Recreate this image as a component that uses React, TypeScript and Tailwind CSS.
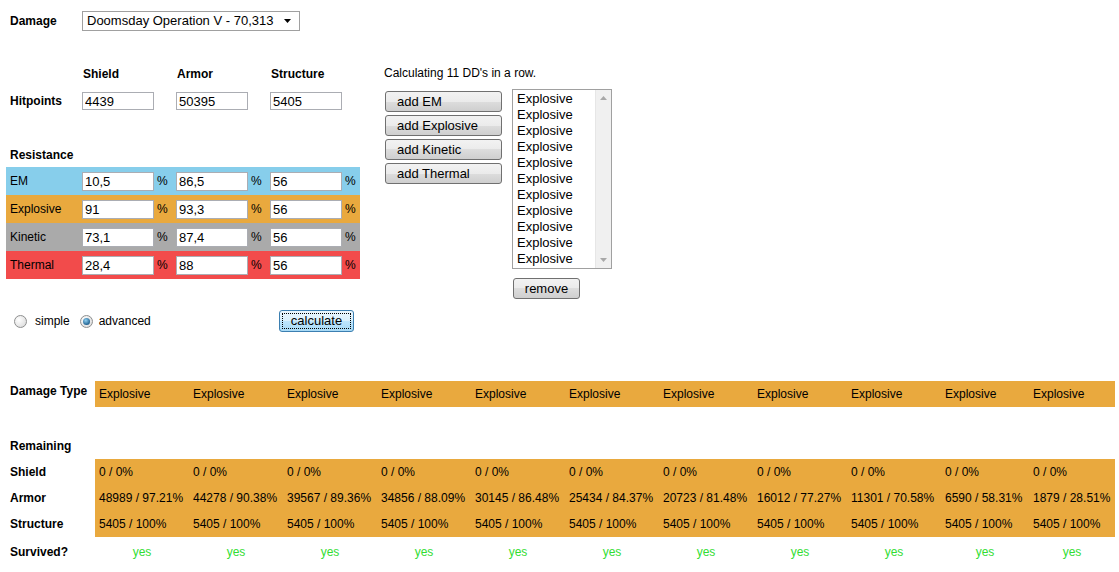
import React from 'react';

const resist = [
  { name: 'EM', bg: 'bg-[#87ceeb]', v: ['10,5', '86,5', '56'] },
  { name: 'Explosive', bg: 'bg-[#e9a93e]', v: ['91', '93,3', '56'] },
  { name: 'Kinetic', bg: 'bg-[#aaaaaa]', v: ['73,1', '87,4', '56'] },
  { name: 'Thermal', bg: 'bg-[#f24b4b]', v: ['28,4', '88', '56'] },
];

const armor = [
  '48989 / 97.21%', '44278 / 90.38%', '39567 / 89.36%', '34856 / 88.09%', '30145 / 86.48%',
  '25434 / 84.37%', '20723 / 81.48%', '16012 / 77.27%', '11301 / 70.58%', '6590 / 58.31%', '1879 / 28.51%',
];

const cols = 'grid grid-cols-[89px_94px_94px_94px_94px_94px_94px_94px_94px_94px_88px_86px]';
const leftCols = 'grid grid-cols-[76px_72px_22px_72px_22px_72px_18px]';
const btn =
  'h-[21px] rounded-[3px] border border-[#707070] bg-[linear-gradient(#f2f2f2,#ebebeb_50%,#dddddd_50%,#cfcfcf)] text-[13px] text-black';

function Field({ value, tall }: { value: string; tall?: boolean }) {
  return (
    <input
      readOnly
      defaultValue={value}
      className={`${tall ? 'h-[19px]' : 'h-[18px]'} w-[72px] border border-[#abadb3] bg-white pl-[2px] text-[13px] text-black outline-none`}
    />
  );
}

function Radio({ checked }: { checked?: boolean }) {
  return (
    <span className="flex h-[13px] w-[13px] items-center justify-center rounded-full border border-[#8e8f8f] bg-[radial-gradient(circle_at_35%_35%,#ffffff,#d6d6d6)]">
      {checked && (
        <span className="h-[7px] w-[7px] rounded-full bg-[radial-gradient(circle_at_40%_35%,#8fd0f2,#1b5c8c_75%)]" />
      )}
    </span>
  );
}

function Row({ label, cells, orange, center, green, h = 'h-[26px]', labelTop }: {
  label: string; cells?: string[]; orange?: boolean; center?: boolean; green?: boolean; h?: string; labelTop?: boolean;
}) {
  return (
    <div className={`${cols} ${h}`}>
      <div className={`flex pl-[4px] font-bold ${labelTop ? 'items-start pt-[3px]' : 'items-center'}`}>{label}</div>
      {(cells ?? Array(11).fill('')).map((c, i) => (
        <div
          key={i}
          className={`flex items-center whitespace-nowrap ${orange ? 'bg-[#e9a93e]' : ''} ${center ? 'justify-center' : 'pl-[4px]'} ${green ? 'text-[#33dd33]' : ''}`}
        >
          {c}
        </div>
      ))}
    </div>
  );
}

export default function App() {
  return (
    <div className="relative h-[572px] w-[1119px] overflow-hidden bg-white pt-[11px] font-['Liberation_Sans',Arial,sans-serif] text-[12px] leading-[14px] text-black">
      {/* damage select */}
      <div className="flex h-[20px] items-center pl-[10px]">
        <span className="w-[72px] font-bold">Damage</span>
        <div className="flex h-[20px] w-[218px] items-center justify-between border border-[#a0a0a0] pl-[4px] pr-[8px] text-[13px]">
          <span>Doomsday Operation V - 70,313</span>
          <svg width="7" height="4" viewBox="0 0 7 4"><polygon points="0,0 7,0 3.5,4" fill="#000" /></svg>
        </div>
      </div>

      <div className="mt-[35px] flex pl-[6px]">
        {/* left: hitpoints + resistance */}
        <div className="w-[354px]">
          <div className={`${leftCols} h-[16px] items-center font-bold`}>
            <span />
            <span className="pl-[1px]">Shield</span><span />
            <span className="pl-[1px]">Armor</span><span />
            <span className="pl-[1px]">Structure</span><span />
          </div>
          <div className={`${leftCols} mt-[10px] h-[18px] items-center`}>
            <span className="pl-[4px] font-bold">Hitpoints</span>
            <Field value="4439" /><span />
            <Field value="50395" /><span />
            <Field value="5405" /><span />
          </div>

          <div className="mt-[38px] pl-[4px] font-bold">Resistance</div>
          <div className="mt-[5px]">
            {resist.map((r) => (
              <div key={r.name} className={`${leftCols} h-[28px] items-center ${r.bg}`}>
                <span className="pl-[4px]">{r.name}</span>
                <Field value={r.v[0]} tall /><span className="pl-[3px]">%</span>
                <Field value={r.v[1]} tall /><span className="pl-[3px]">%</span>
                <Field value={r.v[2]} tall /><span className="pl-[3px]">%</span>
              </div>
            ))}
          </div>

          <div className="mt-[31px] flex h-[22px] items-center">
            <span className="ml-[8px]"><Radio /></span>
            <span className="ml-[8px]">simple</span>
            <span className="ml-[10px]"><Radio checked /></span>
            <span className="ml-[6px]">advanced</span>
            <button className="ml-auto mr-[6px] flex h-[22px] w-[75px] items-center justify-center rounded-[3px] border border-[#3c7fb1] bg-[linear-gradient(#eaf6fd,#d9f0fc_50%,#bee6fd_50%,#a7d9f5)] p-[2px] text-[13px] text-black">
              <span className="flex h-full w-full items-center justify-center border border-dotted border-black">calculate</span>
            </button>
          </div>
        </div>

        {/* right: damage sequence */}
        <div className="ml-[24px]">
          <div className="h-[14px]">Calculating 11 DD's in a row.</div>
          <div className="mt-[9px] flex items-start">
            <div className="ml-[1px] mt-[2px] flex w-[117px] flex-col gap-[3px]">
              {['add EM', 'add Explosive', 'add Kinetic', 'add Thermal'].map((b) => (
                <button key={b} className={`${btn} pl-[11px] text-left`}>{b}</button>
              ))}
            </div>
            <div className="ml-[10px]">
              <div className="flex h-[180px] w-[100px] border border-[#a0a0a0] bg-white">
                <div className="flex-1 pl-[4px] pt-[1px] text-[13px] leading-[16px]">
                  {Array.from({ length: 11 }).map((_, i) => (
                    <div key={i}>Explosive</div>
                  ))}
                </div>
                <div className="flex w-[16px] flex-col items-center justify-between border-l border-[#e6e6e6] bg-[#f0f0f0] py-[6px]">
                  <svg width="7" height="4" viewBox="0 0 7 4"><polygon points="0,4 7,4 3.5,0" fill="#a8a8a8" /></svg>
                  <svg width="7" height="4" viewBox="0 0 7 4"><polygon points="0,0 7,0 3.5,4" fill="#a8a8a8" /></svg>
                </div>
              </div>
              <button className={`${btn} ml-[1px] mt-[9px] w-[67px]`}>remove</button>
            </div>
          </div>
        </div>
      </div>

      {/* results */}
      <div className="mt-[49px] pl-[6px]">
        <Row label="Damage Type" cells={Array(11).fill('Explosive')} orange labelTop />
        <Row label="" />
        <Row label="Remaining" />
        <Row label="Shield" cells={Array(11).fill('0 / 0%')} orange />
        <Row label="Armor" cells={armor} orange />
        <Row label="Structure" cells={Array(11).fill('5405 / 100%')} orange />
        <Row label="Survived?" cells={Array(11).fill('yes')} center green h="h-[30px]" />
      </div>
    </div>
  );
}
